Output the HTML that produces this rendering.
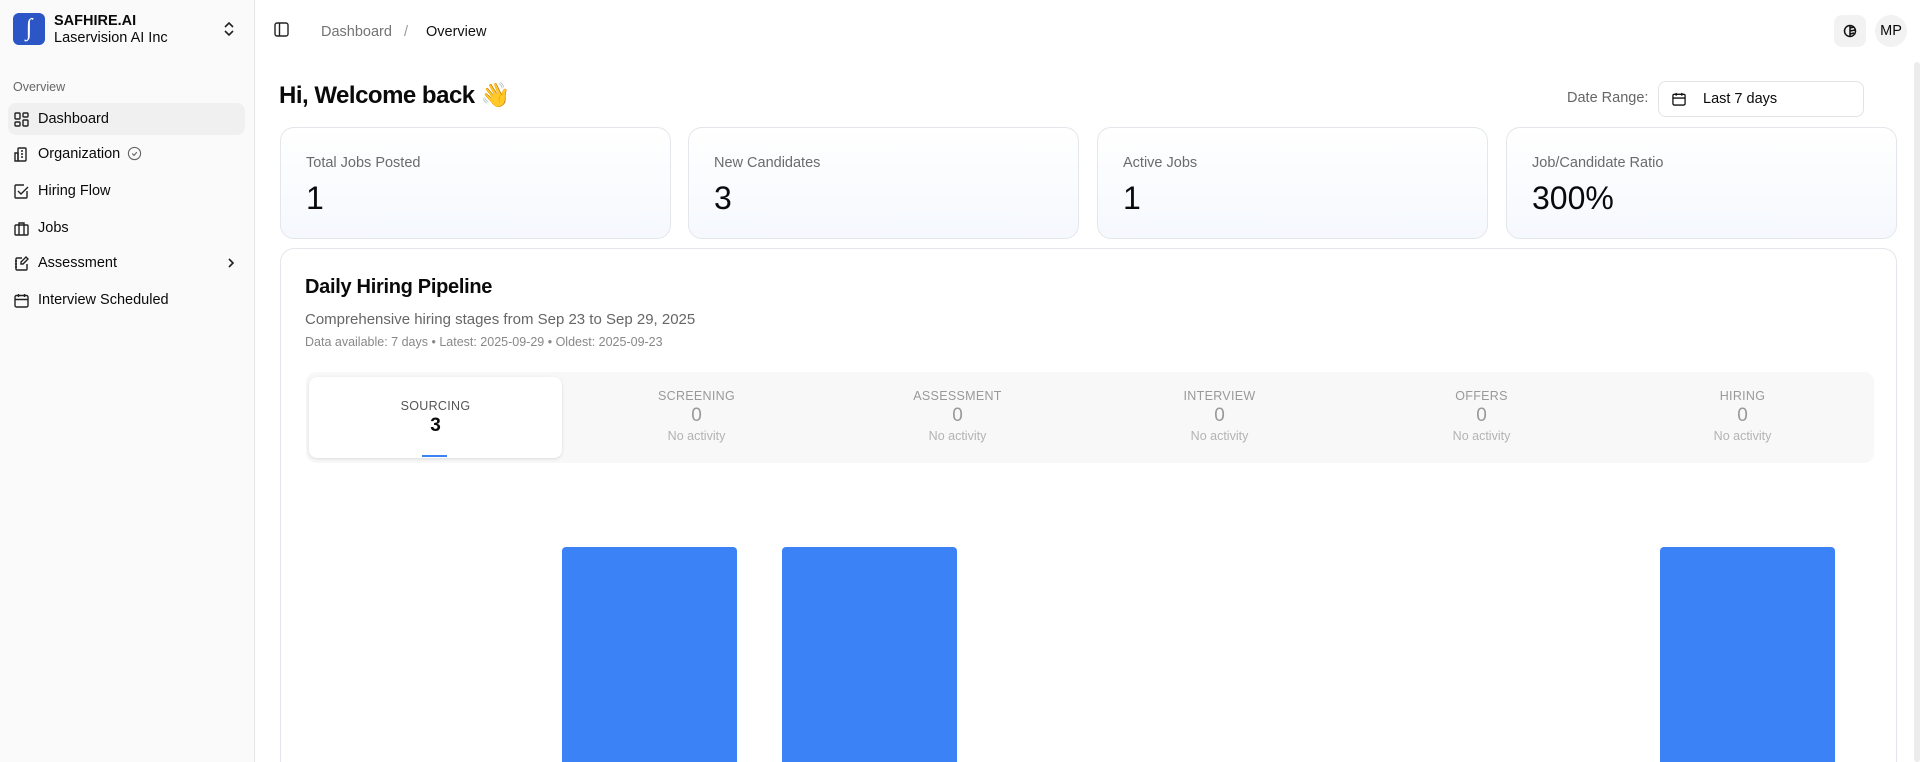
<!DOCTYPE html>
<html><head><meta charset="utf-8"><style>
*{box-sizing:border-box;margin:0;padding:0}
html,body{width:1920px;height:762px;overflow:hidden}
body{font-family:"Liberation Sans",sans-serif;background:#fff;color:#0a0a0a}
#w{position:relative;width:1920px;height:762px;overflow:hidden}
.sb{position:absolute;left:0;top:0;width:255px;height:762px;background:#fafafa;border-right:1px solid #e5e5e5}
.logo{position:absolute;left:13px;top:13px;width:32px;height:32px;border-radius:6px;background:#2c56c6;color:#fff;font-family:"Liberation Serif",serif;font-style:italic;font-size:24px;text-align:center;line-height:30px}
.org1{position:absolute;left:54px;top:13px;font-size:14.5px;font-weight:bold}
.org2{position:absolute;left:54px;top:30px;font-size:14.5px}
.chev{position:absolute;left:222px;top:20px}
.ov{position:absolute;left:13px;top:80px;font-size:12.5px;color:#666}
.it{position:absolute;left:8px;width:237px;height:32px;border-radius:8px;font-size:14.5px;line-height:32px;padding-left:30px}
.it svg{position:absolute;left:6px;top:9px}
.act{background:#f0f0f0}
.bc{position:absolute;top:24px;font-size:14.5px}
.card{position:absolute;top:127px;width:391px;height:112px;border:1px solid #e3e6ea;border-radius:14px;background:linear-gradient(#fff,#f5f8fd)}
.card .l{position:absolute;left:25px;top:27px;font-size:14.5px;color:#6b6b6b}
.card .v{position:absolute;left:25px;top:52px;font-size:32px}
.big{position:absolute;left:280px;top:248px;width:1617px;height:514px;border:1px solid #e3e6ea;border-bottom:none;border-radius:14px 14px 0 0}
.tabs{position:absolute;left:306px;top:372px;width:1568px;height:91px;background:#f8f8f8;border-radius:10px}
.tab{position:absolute;top:0;width:261px;text-align:center}
.tab .a{font-size:12.5px;color:#999;margin-top:17px;letter-spacing:.3px}
.tab .b{font-size:19px;color:#999;margin-top:2px}
.tab .c{font-size:12.5px;color:#b3b3b3;margin-top:2px}
.bar{position:absolute;top:547px;height:215px;width:175px;background:#3b82f6;border-radius:4px 4px 0 0}
</style></head><body><div id="w">
<div class="sb">
<div class="logo">∫</div>
<div class="org1">SAFHIRE.AI</div>
<div class="org2">Laservision AI Inc</div>
<svg class="chev" width="14" height="18" viewBox="0 0 14 18" fill="none" stroke="#222" stroke-width="1.6"><path d="M3 7l4-4 4 4M3 11l4 4 4-4"/></svg>
<div class="ov">Overview</div>
<div class="it act" style="top:103px"><svg width="15" height="15" viewBox="0 0 15 15" fill="none" stroke="#222" stroke-width="1.4"><rect x="1" y="1" width="5" height="6" rx="1"/><rect x="9" y="1" width="5" height="4" rx="1"/><rect x="9" y="8" width="5" height="6" rx="1"/><rect x="1" y="10" width="5" height="4" rx="1"/></svg>Dashboard</div>
<div class="it" style="top:138px"><svg width="15" height="15" viewBox="0 0 15 15" fill="none" stroke="#222" stroke-width="1.4"><rect x="4" y="1" width="8" height="13" rx="1"/><path d="M1 6h3v8H1zM7 4h2M7 7h2M7 10h2"/></svg>Organization <svg style="position:static;vertical-align:-3px;margin-left:3px" width="15" height="15" viewBox="0 0 16 16" fill="none" stroke="#666" stroke-width="1.2"><circle cx="8" cy="8" r="6.5"/><path d="M5.5 8l2 2 3-3.5"/></svg></div>
<div class="it" style="top:175px"><svg width="15" height="15" viewBox="0 0 15 15" fill="none" stroke="#222" stroke-width="1.4"><path d="M13 7v6a1 1 0 01-1 1H2a1 1 0 01-1-1V2a1 1 0 011-1h8"/><path d="M4 7l3 3 7-7"/></svg>Hiring Flow</div>
<div class="it" style="top:212px"><svg width="15" height="15" viewBox="0 0 15 15" fill="none" stroke="#222" stroke-width="1.4"><rect x="1" y="4" width="13" height="10" rx="1"/><path d="M5 14V2h5v12"/></svg>Jobs</div>
<div class="it" style="top:247px"><svg width="15" height="15" viewBox="0 0 15 15" fill="none" stroke="#222" stroke-width="1.4"><path d="M8 2H3a1 1 0 00-1 1v10a1 1 0 001 1h9a1 1 0 001-1V8M1 5h2M1 8h2M1 11h2M12 1l2 2-5 5H7V6z"/></svg>Assessment<svg style="left:218px;top:10px" width="10" height="12" viewBox="0 0 10 12" fill="none" stroke="#222" stroke-width="1.6"><path d="M3 2l4 4-4 4"/></svg></div>
<div class="it" style="top:284px"><svg width="15" height="15" viewBox="0 0 15 15" fill="none" stroke="#222" stroke-width="1.4"><rect x="1" y="2.5" width="13" height="11.5" rx="1.5"/><path d="M1 6.5h13M4.5 1v3M10.5 1v3"/></svg>Interview Scheduled</div>
</div>
<svg style="position:absolute;left:274px;top:22px" width="15" height="15" viewBox="0 0 15 15" fill="none" stroke="#222" stroke-width="1.4"><rect x="1" y="1" width="13" height="13" rx="2"/><path d="M5.5 1v13"/></svg>
<div class="bc" style="left:321px;color:#737373">Dashboard</div>
<div class="bc" style="left:404px;color:#999">/</div>
<div class="bc" style="left:426px;color:#111">Overview</div>
<div style="position:absolute;left:1834px;top:15px;width:32px;height:32px;border-radius:8px;background:#f2f2f2"><svg style="position:absolute;left:9px;top:9px" width="14" height="14" viewBox="0 0 14 14" fill="none" stroke="#111" stroke-width="1.5"><circle cx="7" cy="7" r="5.5"/><path d="M7 1.5v11M7 4l4-1M7 7l5-1M7 10l4-1"/></svg></div>
<div style="position:absolute;left:1875px;top:15px;width:32px;height:32px;border-radius:50%;background:#f2f2f2;font-size:14.5px;line-height:32px;text-align:center">MP</div>
<div style="position:absolute;left:1914px;top:62px;width:6px;height:700px;background:#ececec;border-radius:3px"></div>
<div style="position:absolute;left:279px;top:81px;font-size:24px;font-weight:bold;letter-spacing:-.5px">Hi, Welcome back 👋</div>
<div style="position:absolute;left:1567px;top:90px;font-size:14.5px;color:#666">Date Range:</div>
<div style="position:absolute;left:1658px;top:81px;width:206px;height:36px;border:1px solid #e3e3e3;border-radius:8px;font-size:14.5px;line-height:34px;padding-left:44px"><svg style="position:absolute;left:13px;top:10px" width="14" height="14" viewBox="0 0 15 15" fill="none" stroke="#111" stroke-width="1.4"><rect x="1" y="2.5" width="13" height="11.5" rx="1.5"/><path d="M1 6.5h13M4.5 1v3M10.5 1v3"/></svg>Last 7 days</div>
<div class="card" style="left:280px"><div class="l">Total Jobs Posted</div><div class="v">1</div></div>
<div class="card" style="left:688px"><div class="l">New Candidates</div><div class="v">3</div></div>
<div class="card" style="left:1097px"><div class="l">Active Jobs</div><div class="v">1</div></div>
<div class="card" style="left:1506px"><div class="l">Job/Candidate Ratio</div><div class="v">300%</div></div>
<div class="big"></div>
<div style="position:absolute;left:305px;top:276px;font-size:20px;font-weight:bold;letter-spacing:-.3px">Daily Hiring Pipeline</div>
<div style="position:absolute;left:305px;top:311px;font-size:15px;color:#666">Comprehensive hiring stages from Sep 23 to Sep 29, 2025</div>
<div style="position:absolute;left:305px;top:335px;font-size:12.5px;color:#888">Data available: 7 days • Latest: 2025-09-29 • Oldest: 2025-09-23</div>
<div class="tabs">
<div style="position:absolute;left:3px;top:5px;width:253px;height:81px;background:#fff;border-radius:8px;box-shadow:0 1px 3px rgba(0,0,0,.12);text-align:center"><div style="font-size:12.5px;color:#555;margin-top:22px;letter-spacing:.3px">SOURCING</div><div style="font-size:19px;font-weight:bold;margin-top:2px">3</div><div style="position:absolute;left:113px;bottom:1px;width:25px;height:2px;background:#3b82f6"></div></div>
<div class="tab" style="left:260px"><div class="a">SCREENING</div><div class="b">0</div><div class="c">No activity</div></div>
<div class="tab" style="left:521px"><div class="a">ASSESSMENT</div><div class="b">0</div><div class="c">No activity</div></div>
<div class="tab" style="left:783px"><div class="a">INTERVIEW</div><div class="b">0</div><div class="c">No activity</div></div>
<div class="tab" style="left:1045px"><div class="a">OFFERS</div><div class="b">0</div><div class="c">No activity</div></div>
<div class="tab" style="left:1306px"><div class="a">HIRING</div><div class="b">0</div><div class="c">No activity</div></div>
</div>
<div class="bar" style="left:562px"></div>
<div class="bar" style="left:782px"></div>
<div class="bar" style="left:1660px"></div>
</div></body></html>
